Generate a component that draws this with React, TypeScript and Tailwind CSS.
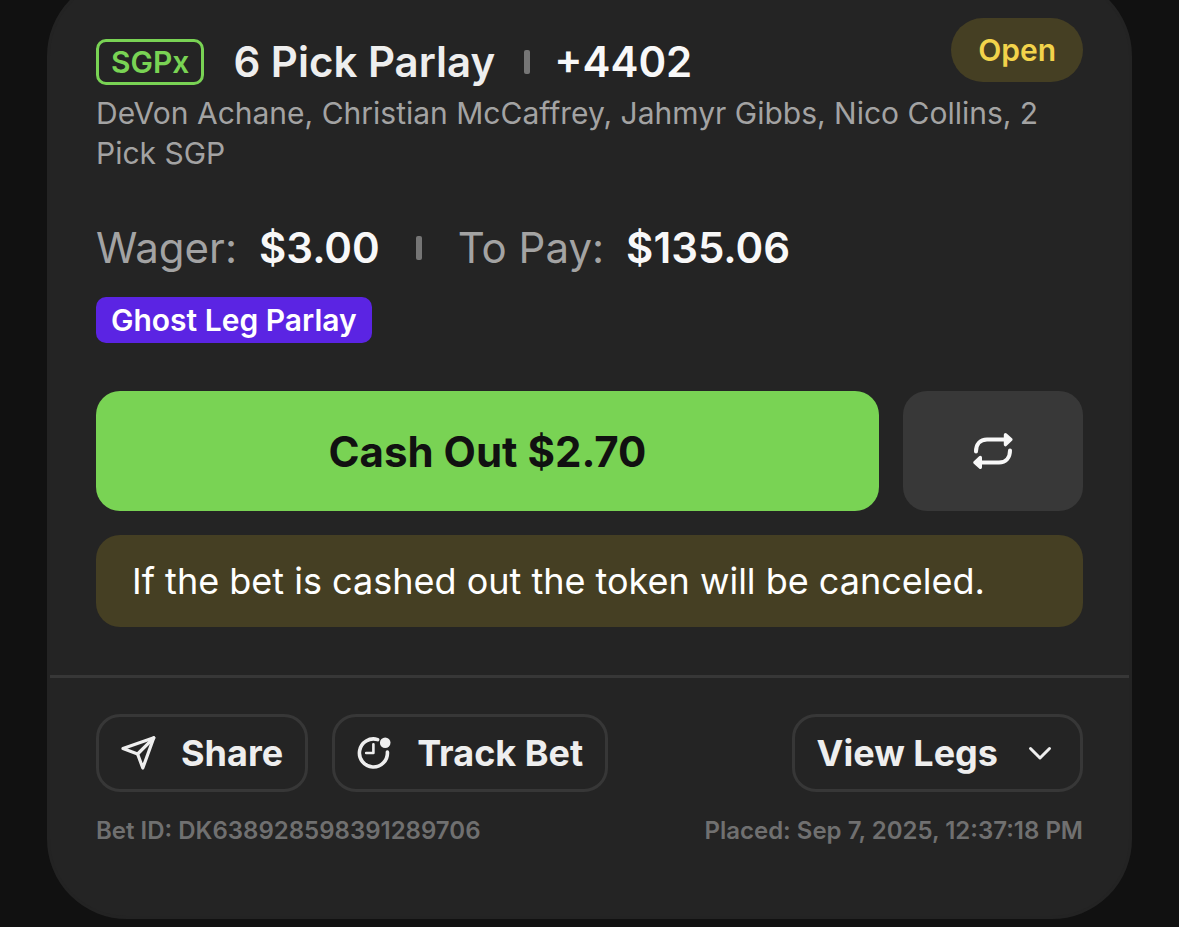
import type { ReactNode } from "react";

interface Bet {
  title: string;
  odds: string;
  picks: string;
  wager: string;
  toPay: string;
  token: string;
  cashOut: string;
  id: string;
  placed: string;
}

const bet: Bet = {
  title: "6 Pick Parlay",
  odds: "+4402",
  picks: "DeVon Achane, Christian McCaffrey, Jahmyr Gibbs, Nico Collins, 2 Pick SGP",
  wager: "$3.00",
  toPay: "$135.06",
  token: "Ghost Leg Parlay",
  cashOut: "$2.70",
  id: "DK638928598391289706",
  placed: "Sep 7, 2025, 12:37:18 PM",
};

function RepeatIcon() {
  return (
    <svg
      viewBox="0 0 40 40"
      className="size-10"
      fill="none"
      stroke="currentColor"
      strokeWidth="4"
      strokeLinecap="round"
      strokeLinejoin="round"
      aria-hidden="true"
    >
      <path d="M3 20.5C3 13.5 7 8.5 14 8.5H32" />
      <path d="M32.5 3.7L37.8 8.5L32.5 13.6Z" fill="currentColor" strokeWidth="3.4" />
      <path d="M37 19.5C37 26.5 33 31.5 26 31.5H8" />
      <path d="M7.3 26.5L2 31.5L7.3 36.3Z" fill="currentColor" strokeWidth="3.4" />
    </svg>
  );
}

function SendIcon() {
  return (
    <svg
      viewBox="0 0 36 36"
      className="size-9"
      fill="none"
      stroke="currentColor"
      strokeWidth="3.2"
      strokeLinecap="round"
      strokeLinejoin="round"
      aria-hidden="true"
    >
      <path d="M2 13.6L32.8 2.8L21.8 33L16.6 19Z" />
      <path d="M32.8 2.8L16.6 19" />
    </svg>
  );
}

function TrackIcon() {
  return (
    <svg
      viewBox="0 0 36 36"
      className="size-9"
      fill="none"
      stroke="currentColor"
      strokeLinecap="round"
      strokeLinejoin="round"
      aria-hidden="true"
    >
      <path d="M30.4 17A14 14 0 1 1 20.6 4.6" strokeWidth="3.6" />
      <path d="M16.4 9.2V18H9.2" strokeWidth="2.6" />
      <circle cx="28.2" cy="7.7" r="5.3" fill="currentColor" stroke="none" />
    </svg>
  );
}

function ChevronIcon() {
  return (
    <svg
      viewBox="0 0 24 24"
      className="size-6"
      fill="none"
      stroke="currentColor"
      strokeWidth="3"
      strokeLinecap="round"
      strokeLinejoin="round"
      aria-hidden="true"
    >
      <path d="M2.5 7.5L12 17L21.5 7.5" />
    </svg>
  );
}

function Separator() {
  return <span className="h-6 w-1.5 rounded-xs bg-[#757575]" />;
}

function OutlineButton({ children }: { children: ReactNode }) {
  return (
    <button
      type="button"
      className="flex h-[78px] items-center gap-6 rounded-3xl border-3 border-[#373737] px-[22px] text-4xl font-bold text-[#eeeeee]"
    >
      {children}
    </button>
  );
}

export default function App() {
  return (
    <main className="min-h-screen overflow-hidden bg-[#111111] px-[47px] pb-2 font-['Inter',sans-serif]">
      <article className="-mt-6 rounded-[80px] border-3 border-[#232323] bg-[#242424] pt-[39px] pb-[70px]">
        <div className="px-[46px]">
          {/* Title and status */}
          <header className="flex items-start justify-between">
            <div className="flex h-[67px] items-end">
              <div className="flex items-center">
                <span className="flex h-[46px] items-center rounded-[10px] border-3 border-[#79d354] px-3 text-[30px] font-semibold text-[#79d354]">
                  SGPx
                </span>
                <h1 className="mx-[29px] text-[42px] leading-[46px] font-semibold text-[#eeeeee]">
                  {bet.title}
                </h1>
                <Separator />
                <span className="ml-6 text-[42px] leading-[46px] font-semibold text-[#f8f8f8]">
                  {bet.odds}
                </span>
              </div>
            </div>
            <span className="flex h-16 items-center rounded-full bg-[#453f23] px-[27px] text-[30px] font-semibold text-[#f2d34b]">
              Open
            </span>
          </header>
          <p className="mt-2 text-[30px] leading-10 text-[#a3a3a3]">{bet.picks}</p>

          {/* Stake */}
          <div className="mt-[51px] flex items-center text-[42px] leading-[48px]">
            <span className="text-[#a3a3a3]">Wager:</span>
            <span className="mr-9 ml-[22px] font-semibold text-[#f8f8f8]">{bet.wager}</span>
            <Separator />
            <span className="ml-9 text-[#a3a3a3]">To Pay:</span>
            <span className="ml-[22px] font-semibold text-[#f8f8f8]">{bet.toPay}</span>
          </div>
          <div className="mt-[25px] flex">
            <span className="flex h-[46px] items-center rounded-[10px] bg-[#5b24e3] px-[15px] text-[30px] font-semibold text-white">
              {bet.token}
            </span>
          </div>

          {/* Cash out */}
          <div className="mt-12 flex gap-6">
            <button
              type="button"
              className="h-[120px] flex-1 rounded-3xl bg-[#79d354] text-[42px] font-bold text-[#111111]"
            >
              Cash Out {bet.cashOut}
            </button>
            <button
              type="button"
              aria-label="Bet again"
              className="flex h-[120px] w-[180px] items-center justify-center rounded-3xl bg-[#383838] text-[#f8f8f8]"
            >
              <RepeatIcon />
            </button>
          </div>
          <p className="mt-6 rounded-3xl bg-[#453f23] px-9 py-[22px] text-4xl leading-[48px] text-white">
            If the bet is cashed out the token will be canceled.
          </p>
        </div>

        <hr className="mt-12 border-t-3 border-[#373737]" />

        <footer className="px-[46px] pt-9">
          <div className="flex items-center gap-6">
            <OutlineButton>
              <SendIcon />
              Share
            </OutlineButton>
            <OutlineButton>
              <TrackIcon />
              Track Bet
            </OutlineButton>
            <div className="ml-auto">
              <OutlineButton>
                View Legs
                <span className="px-1.5">
                  <ChevronIcon />
                </span>
              </OutlineButton>
            </div>
          </div>
          <div className="mt-6 flex justify-between text-2xl leading-[30px] font-semibold text-[#707070]">
            <span>Bet ID: {bet.id}</span>
            <span>Placed: {bet.placed}</span>
          </div>
        </footer>
      </article>
    </main>
  );
}
